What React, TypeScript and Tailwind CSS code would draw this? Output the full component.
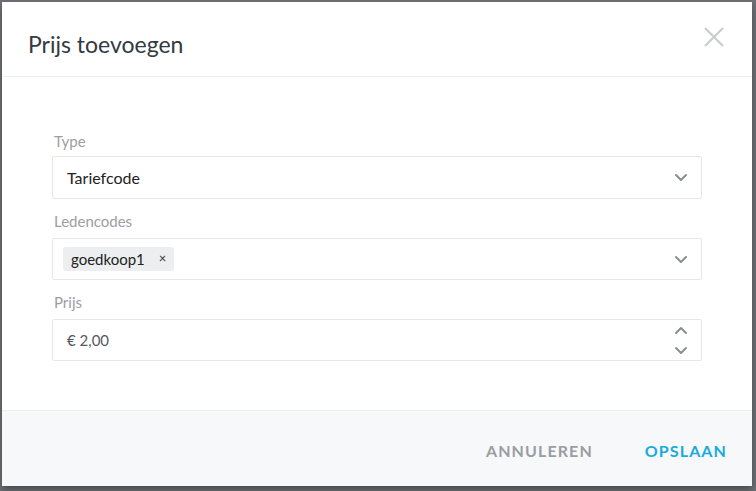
import React from 'react';

const Chevron: React.FC<{ up?: boolean }> = ({ up }) => (
  <svg width="14" height="9" viewBox="0 0 14 9" fill="none" className={up ? 'rotate-180' : ''}>
    <path d="M2 2l5 5 5-5" stroke="#8a8d91" strokeWidth="2" strokeLinecap="round" strokeLinejoin="round" />
  </svg>
);

export default function App() {
  return (
    <div className="w-[756px] h-[491px] bg-[#6e7276] pt-[2px] pl-[2px]" style={{ fontFamily: 'Lato, "Open Sans", sans-serif' }}>
      <div className="w-[750px] h-[484px] bg-white flex flex-col shadow-[0_4px_8px_rgba(0,0,0,0.35)]">
        <div className="h-[75px] flex items-center justify-between pl-[26px] pr-[28px] border-b border-[#eeeff1]">
          <h2 className="text-[23px] text-[#333a42] mt-[10px]">Prijs toevoegen</h2>
          <svg width="20" height="20" viewBox="0 0 20 20" className="mt-[-4px]">
            <path d="M1 1l18 18M19 1L1 19" stroke="#cbcccd" strokeWidth="2.2" />
          </svg>
        </div>

        <div className="flex-1 px-[50px] pt-[54px]">
          <div className="text-[15px] text-[#9b9ea2] leading-[20px] pl-[2px]">Type</div>
          <div className="mt-[5px] h-[43px] border border-[#e6e7e9] rounded-[2px] flex items-center justify-between pl-[14px] pr-[13px]">
            <span className="text-[16px] text-[#222]">Tariefcode</span>
            <Chevron />
          </div>

          <div className="mt-[12px] text-[15px] text-[#9b9ea2] leading-[20px] pl-[2px]">Ledencodes</div>
          <div className="mt-[7px] h-[42px] border border-[#e6e7e9] rounded-[2px] flex items-center justify-between pl-[10px] pr-[13px]">
            <span className="h-[24px] bg-[#eceef0] rounded-[3px] flex items-center gap-[14px] px-[8px] text-[15px] text-[#222]">
              goedkoop1
              <span className="text-[13px] text-[#333]">×</span>
            </span>
            <Chevron />
          </div>

          <div className="mt-[12px] text-[15px] text-[#9b9ea2] leading-[20px] pl-[2px]">Prijs</div>
          <div className="mt-[7px] h-[42px] border border-[#e6e7e9] rounded-[2px] flex items-center justify-between pl-[14px] pr-[13px]">
            <span className="text-[15px] text-[#555a60]">€ 2,00</span>
            <div className="flex flex-col gap-[11px] mt-[1px]">
              <Chevron up />
              <Chevron />
            </div>
          </div>
        </div>

        <div className="h-[76px] bg-[#f7f8fa] border-t border-[#eeeff1] flex items-center justify-end gap-[52px] pr-[25px] pt-[4px]">
          <button className="text-[16px] font-bold tracking-[1.1px] text-[#9b9da0]">ANNULEREN</button>
          <button className="text-[16px] font-bold tracking-[1.1px] text-[#19aadf]">OPSLAAN</button>
        </div>
      </div>
    </div>
  );
}
